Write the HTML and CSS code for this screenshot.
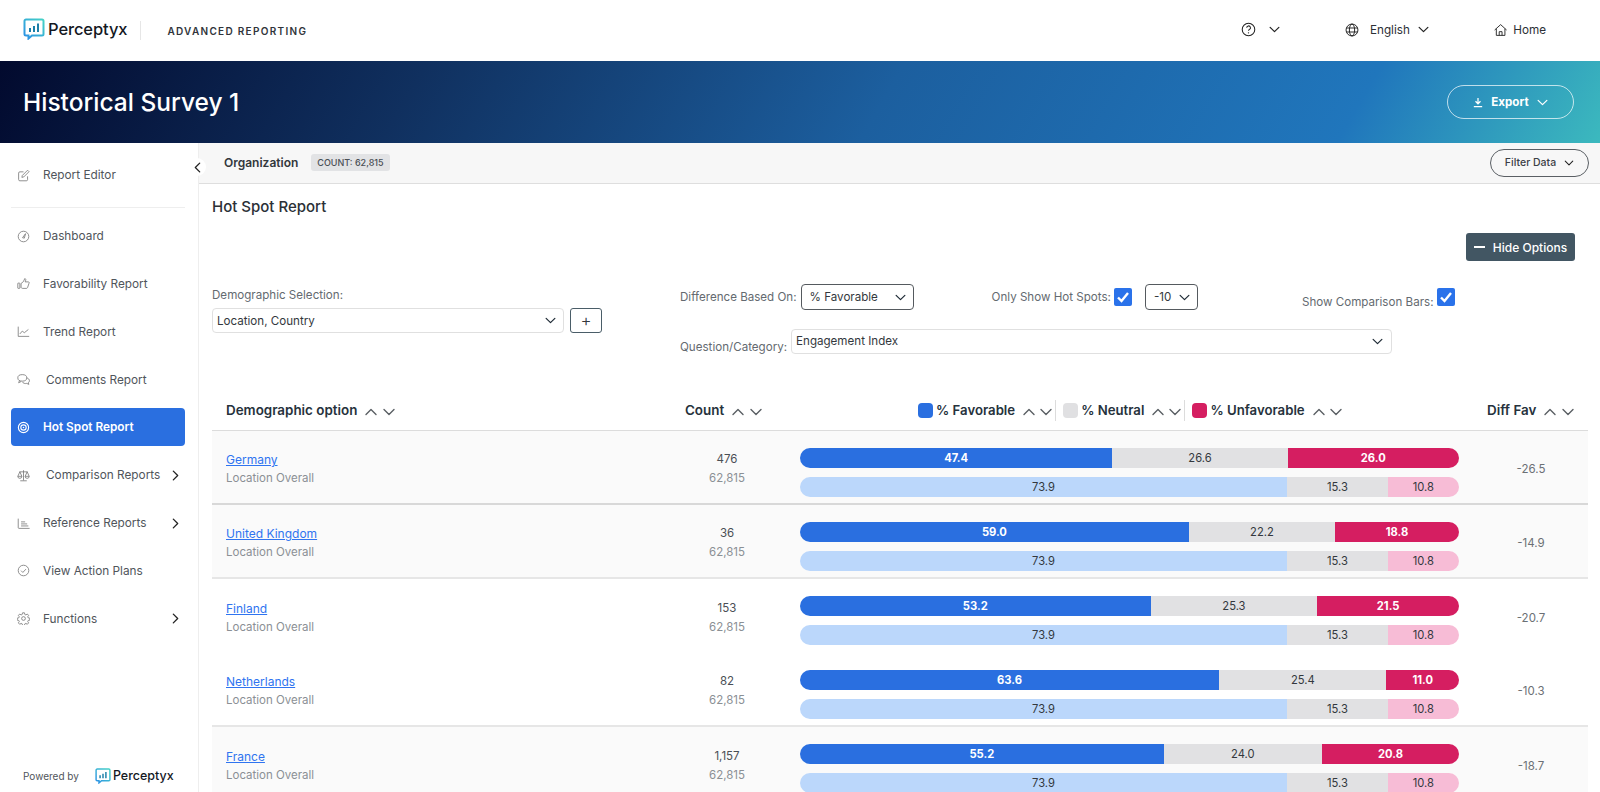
FILE: index.html
```html
<!DOCTYPE html>
<html lang="en">
<head>
<meta charset="utf-8">
<title>Hot Spot Report</title>
<link rel="stylesheet" href="styles.css">
</head>
<body>
<svg class="defs" width="0" height="0" aria-hidden="true">
  <defs>
    <linearGradient id="lg" x1="1" y1="0" x2="0" y2="1"><stop offset="0" stop-color="#45d2c6"/><stop offset="1" stop-color="#2b8fe6"/></linearGradient>
    <symbol id="down" viewBox="0 0 12 8"><path d="M1 1.5l5 5 5-5" fill="none" stroke="currentColor" stroke-width="1.4" stroke-linecap="round" stroke-linejoin="round"/></symbol>
    <symbol id="up" viewBox="0 0 12 8"><path d="M1 6.5l5-5 5 5" fill="none" stroke="currentColor" stroke-width="1.4" stroke-linecap="round" stroke-linejoin="round"/></symbol>
    <symbol id="right" viewBox="0 0 8 12"><path d="M1.5 1l5 5-5 5" fill="none" stroke="currentColor" stroke-width="1.5" stroke-linecap="round" stroke-linejoin="round"/></symbol>
    <symbol id="logo" viewBox="0 0 22 22"><path d="M3 1.500h16a1.500 1.500 0 0 1 1.500 1.500v13a1.500 1.500 0 0 1-1.500 1.500H9l-3.500 3v-3H3A1.500 1.500 0 0 1 1.500 16V3A1.500 1.500 0 0 1 3 1.500z" fill="#fff" stroke="url(#lg)" stroke-width="2"/><path d="M7 10v4M11 8v6M15 5.500V14" stroke="#1b7fa8" stroke-width="2"/></symbol>
  </defs>
</svg>

<header class="topbar">
  <div class="brand">
    <svg class="logo"><use href="#logo"/></svg>
    <span class="brand-name">Perceptyx</span>
    <span class="brand-sep"></span>
    <span class="brand-sub">ADVANCED REPORTING</span>
  </div>
  <nav class="topnav">
    <div class="topnav-item help">
      <svg class="ico-16" viewBox="0 0 16 16"><circle cx="8" cy="8" r="6.700" fill="none" stroke="#222" stroke-width="1.100"/><path d="M6.100 6.200a2 2 0 1 1 3 1.700c-.7.4-1.100.8-1.100 1.500" fill="none" stroke="#222" stroke-width="1.100"/><circle cx="8" cy="11.500" r=".7" fill="#222"/></svg>
      <svg class="chev-top"><use href="#down"/></svg>
    </div>
    <div class="topnav-item lang">
      <svg class="ico-14" viewBox="0 0 16 16"><g fill="none" stroke="#222" stroke-width="1.100"><circle cx="8" cy="8" r="6.800"/><ellipse cx="8" cy="8" rx="3" ry="6.800"/><path d="M1.500 5.700h13M1.500 10.300h13"/></g></svg>
      <span>English</span>
      <svg class="chev-top"><use href="#down"/></svg>
    </div>
    <div class="topnav-item home">
      <svg class="ico-14" viewBox="0 0 16 16"><path d="M.8 8L8 1.500 15.200 8M2.800 6.500V14.500h10.400V6.500M6.300 14.500V10h3.400v4.500" fill="none" stroke="#222" stroke-width="1.100" stroke-linejoin="round"/></svg>
      <span>Home</span>
    </div>
  </nav>
</header>

<section class="banner">
  <h1>Historical Survey 1</h1>
  <button class="export">
    <svg class="ico-export" viewBox="0 0 12 12"><path d="M6 .5v6.500M3 4.500L6 7.500l3-3M1 10.800h10" fill="none" stroke="#fff" stroke-width="1.500"/></svg>
    <span>Export</span>
    <svg class="chev-export"><use href="#down"/></svg>
  </button>
</section>

<div class="shell">
  <aside class="side">
    <button class="collapse" aria-label="Collapse"><svg viewBox="0 0 8 12"><path d="M6.500 1l-5 5 5 5" fill="none" stroke="#222" stroke-width="1.500" stroke-linecap="round" stroke-linejoin="round"/></svg></button>
    <a class="nav-item editor">
      <svg class="nav-ico" viewBox="0 0 16 16"><g fill="none" stroke="#777" stroke-width="1"><path d="M13 9v4a1.500 1.500 0 0 1-1.500 1.500h-8A1.500 1.500 0 0 1 2 13V5a1.500 1.500 0 0 1 1.500-1.500H8"/><path d="M6.500 8l6.500-6.500 1.800 1.800L8.300 9.800l-2.300.5z"/></g></svg>
      <span>Report Editor</span>
    </a>
    <div class="nav-rule"></div>
    <a class="nav-item">
      <svg class="nav-ico" viewBox="0 0 16 16"><g fill="none" stroke="#777" stroke-width="1"><circle cx="8" cy="8" r="6.500"/><path d="M6.800 9.500L10.500 4.500 9 10z"/></g></svg>
      <span>Dashboard</span>
    </a>
    <a class="nav-item">
      <svg class="nav-ico" viewBox="0 0 16 16"><g fill="none" stroke="#777" stroke-width="1"><rect x="1" y="7.500" width="2.500" height="6.500" rx=".5"/><path d="M5 8l3-2.500L9.500 2c1.200 0 1.500 1 1.200 2L10 6h4c1 0 1.200 1 .8 1.700L13 13c-.3.700-.8 1-1.500 1H7c-1 0-2-.5-2-1.500z"/></g></svg>
      <span>Favorability Report</span>
    </a>
    <a class="nav-item">
      <svg class="nav-ico" viewBox="0 0 16 16"><g fill="none" stroke="#777" stroke-width="1"><path d="M1.500 2v12h13.500"/><path d="M3.500 11l3-3.500 2.500 2 5-4"/></g></svg>
      <span>Trend Report</span>
    </a>
    <a class="nav-item wide">
      <svg class="nav-ico" viewBox="0 0 16 16"><g fill="none" stroke="#777" stroke-width="1"><ellipse cx="6.500" cy="6" rx="5.500" ry="4"/><path d="M3 9.500L2 12l3-1.500M12 6c2 .5 3.300 2 3.300 3.500 0 1-.5 1.800-1.300 2.500l.5 2-2.500-1.200c-2 .5-4.500 0-5.500-2"/></g></svg>
      <span>Comments Report</span>
    </a>
    <a class="nav-item active">
      <svg class="nav-ico" viewBox="0 0 16 16"><g fill="none" stroke="#fff"><circle cx="8" cy="8" r="6.300" stroke-width="1.400"/><circle cx="8" cy="8" r="3.300" stroke-width="1.400"/></g><circle cx="8" cy="8" r="1" fill="#fff"/></svg>
      <span>Hot Spot Report</span>
    </a>
    <a class="nav-item wide">
      <svg class="nav-ico" viewBox="0 0 16 16"><g fill="none" stroke="#777" stroke-width="1"><path d="M8 1.500V14M4 14.500h8M3 3.500h10M3.500 3.500L1 9h5zM12.500 3.500L10 9h5z"/><path d="M1 9a2.500 2.500 0 0 0 5 0M10 9a2.500 2.500 0 0 0 5 0"/></g></svg>
      <span>Comparison Reports</span>
      <svg class="nav-chev"><use href="#right"/></svg>
    </a>
    <a class="nav-item">
      <svg class="nav-ico" viewBox="0 0 16 16"><g fill="none" stroke="#777" stroke-width="1"><path d="M1.500 2v11a1 1 0 0 0 1 1h13"/><path d="M5 6h5M5 8.500h7.500M5 11h9"/></g></svg>
      <span>Reference Reports</span>
      <svg class="nav-chev"><use href="#right"/></svg>
    </a>
    <a class="nav-item">
      <svg class="nav-ico" viewBox="0 0 16 16"><g fill="none" stroke="#777" stroke-width="1"><circle cx="8" cy="8" r="6.500"/><path d="M5 8.200l2.200 2.200L11 6.300"/></g></svg>
      <span>View Action Plans</span>
    </a>
    <a class="nav-item">
      <svg class="nav-ico" viewBox="0 0 16 16"><g fill="none" stroke="#777" stroke-width="1"><circle cx="8" cy="8" r="2.300"/><path d="M6.800 1h2.400l.4 2 1.300.6 1.800-1.100 1.600 1.700-1.100 1.700.6 1.300 2 .4v2.400l-2 .4-.6 1.300 1.100 1.700-1.600 1.700-1.800-1.100-1.300.6-.4 2H6.800l-.4-2-1.300-.6-1.800 1.100-1.600-1.700 1.100-1.700-.6-1.300-2-.4V7.600l2-.4.6-1.300-1.100-1.700 1.600-1.700 1.800 1.100 1.300-.6z"/></g></svg>
      <span>Functions</span>
      <svg class="nav-chev"><use href="#right"/></svg>
    </a>
    <div class="powered">
      <span>Powered by</span>
      <svg class="logo-sm"><use href="#logo"/></svg>
      <b>Perceptyx</b>
    </div>
  </aside>

  <main class="main">
    <div class="toolbar">
      <strong>Organization</strong>
      <span class="count-badge">COUNT: 62,815</span>
      <button class="filter">Filter Data <svg class="chev-filter"><use href="#down"/></svg></button>
    </div>
    <div class="content">
      <h2>Hot Spot Report</h2>
      <div class="hide-row">
        <button class="hide-btn"><i></i>Hide Options</button>
      </div>
      <div class="options">
        <div class="opt-demo">
          <label>Demographic Selection:</label>
          <div class="opt-demo-row">
            <div class="select sel-demo"><span>Location, Country</span><svg class="chev-sel"><use href="#down"/></svg></div>
            <button class="plus">+</button>
          </div>
        </div>
        <div class="opt-mid">
          <div class="opt-line1">
            <label>Difference Based On:</label>
            <div class="select sel-dark sel-diff"><span>% Favorable</span><svg class="chev-sel"><use href="#down"/></svg></div>
            <label class="lbl-hot">Only Show Hot Spots:</label>
            <span class="check"><svg viewBox="0 0 18 18"><path d="M4 9.500l3.500 3.500L14 5" fill="none" stroke="#fff" stroke-width="2.400"/></svg></span>
            <div class="select sel-dark sel-ten"><span>-10</span><svg class="chev-sel"><use href="#down"/></svg></div>
            <div class="show-bars">
              <label>Show Comparison Bars:</label>
              <span class="check"><svg viewBox="0 0 18 18"><path d="M4 9.500l3.500 3.500L14 5" fill="none" stroke="#fff" stroke-width="2.400"/></svg></span>
            </div>
          </div>
          <div class="opt-line2">
            <label>Question/Category:</label>
            <div class="select sel-q"><span>Engagement Index</span><svg class="chev-sel"><use href="#down"/></svg></div>
          </div>
        </div>
      </div>

      <div class="table">
        <div class="thead">
          <div class="c-demo th">Demographic option <span class="sort"><svg><use href="#up"/></svg><svg><use href="#down"/></svg></span></div>
          <div class="c-count th">Count <span class="sort"><svg><use href="#up"/></svg><svg><use href="#down"/></svg></span></div>
          <div class="c-bars th th-bars">
            <span class="th-part"><i class="sw sw-fav"></i>% Favorable <span class="sort"><svg><use href="#up"/></svg><svg><use href="#down"/></svg></span></span>
            <span class="th-part sep"><i class="sw sw-neu"></i>% Neutral <span class="sort"><svg><use href="#up"/></svg><svg><use href="#down"/></svg></span></span>
            <span class="th-part sep"><i class="sw sw-unf"></i>% Unfavorable <span class="sort"><svg><use href="#up"/></svg><svg><use href="#down"/></svg></span></span>
          </div>
          <div class="c-diff th">Diff Fav <span class="sort"><svg><use href="#up"/></svg><svg><use href="#down"/></svg></span></div>
        </div>

        <div class="row shade line strong">
          <div class="c-demo"><a class="name">Germany</a><span class="sub">Location Overall</span></div>
          <div class="c-count"><span>476</span><span class="sub">62,815</span></div>
          <div class="c-bars">
            <div class="bar"><span class="b-fav" style="width:47.4%">47.4</span><span class="b-neu" style="width:26.6%">26.6</span><span class="b-unf" style="width:26%">26.0</span></div>
            <div class="bar cmp"><span class="b-fav" style="width:73.9%">73.9</span><span class="b-neu" style="width:15.3%">15.3</span><span class="b-unf" style="width:10.8%">10.8</span></div>
          </div>
          <div class="c-diff">-26.5</div>
        </div>
        <div class="row shade line">
          <div class="c-demo"><a class="name">United Kingdom</a><span class="sub">Location Overall</span></div>
          <div class="c-count"><span>36</span><span class="sub">62,815</span></div>
          <div class="c-bars">
            <div class="bar"><span class="b-fav" style="width:59%">59.0</span><span class="b-neu" style="width:22.2%">22.2</span><span class="b-unf" style="width:18.8%">18.8</span></div>
            <div class="bar cmp"><span class="b-fav" style="width:73.9%">73.9</span><span class="b-neu" style="width:15.3%">15.3</span><span class="b-unf" style="width:10.8%">10.8</span></div>
          </div>
          <div class="c-diff">-14.9</div>
        </div>
        <div class="row">
          <div class="c-demo"><a class="name">Finland</a><span class="sub">Location Overall</span></div>
          <div class="c-count"><span>153</span><span class="sub">62,815</span></div>
          <div class="c-bars">
            <div class="bar"><span class="b-fav" style="width:53.2%">53.2</span><span class="b-neu" style="width:25.3%">25.3</span><span class="b-unf" style="width:21.5%">21.5</span></div>
            <div class="bar cmp"><span class="b-fav" style="width:73.9%">73.9</span><span class="b-neu" style="width:15.3%">15.3</span><span class="b-unf" style="width:10.8%">10.8</span></div>
          </div>
          <div class="c-diff">-20.7</div>
        </div>
        <div class="row line">
          <div class="c-demo"><a class="name">Netherlands</a><span class="sub">Location Overall</span></div>
          <div class="c-count"><span>82</span><span class="sub">62,815</span></div>
          <div class="c-bars">
            <div class="bar"><span class="b-fav" style="width:63.6%">63.6</span><span class="b-neu" style="width:25.4%">25.4</span><span class="b-unf" style="width:11%">11.0</span></div>
            <div class="bar cmp"><span class="b-fav" style="width:73.9%">73.9</span><span class="b-neu" style="width:15.3%">15.3</span><span class="b-unf" style="width:10.8%">10.8</span></div>
          </div>
          <div class="c-diff">-10.3</div>
        </div>
        <div class="row shade">
          <div class="c-demo"><a class="name">France</a><span class="sub">Location Overall</span></div>
          <div class="c-count"><span>1,157</span><span class="sub">62,815</span></div>
          <div class="c-bars">
            <div class="bar"><span class="b-fav" style="width:55.2%">55.2</span><span class="b-neu" style="width:24%">24.0</span><span class="b-unf" style="width:20.8%">20.8</span></div>
            <div class="bar cmp"><span class="b-fav" style="width:73.9%">73.9</span><span class="b-neu" style="width:15.3%">15.3</span><span class="b-unf" style="width:10.8%">10.8</span></div>
          </div>
          <div class="c-diff">-18.7</div>
        </div>
      </div>
    </div>
  </main>
</div>
</body>
</html>
```
FILE: styles.css
```css
* { box-sizing: border-box; }
html, body { margin: 0; height: 792px; overflow: hidden; }
body { font-family: "Inter", "Liberation Sans", sans-serif; background: #fff; color: #33383d; font-size: 12px; }
.defs { position: absolute; }
button { font-family: inherit; }

.topbar { height: 61px; display: flex; align-items: center; justify-content: space-between; background: #fff; }
.brand { display: flex; align-items: center; padding-left: 23px; }
.logo { width: 22px; height: 22px; margin-top: -3px; }
.brand-name { font-size: 16.500px; font-weight: 500; color: #14181f; margin: -3px 0 0 3px; letter-spacing: -.1px; }
.brand-sep { width: 1px; height: 19px; background: #e6e6e6; margin: 0 26px 0 13px; }
.brand-sub { font-size: 10px; font-weight: 600; letter-spacing: 1.300px; color: #30343a; }
.topnav { display: flex; align-items: center; font-size: 11.700px; color: #2c3036; height: 20px; padding-right: 54px; margin-bottom: 2px; }
.topnav-item { display: flex; align-items: center; }
.help { width: 104px; }
.help .chev-top { margin-left: 13px; }
.lang { width: 149px; }
.lang span { margin: 0 8px 0 11px; }
.home { width: 52px; }
.home span { margin-left: 6px; }
.ico-16 { width: 15px; height: 15px; }
.ico-14 { width: 14px; height: 14px; }
.chev-top { width: 11px; height: 7px; color: #222; }

.banner { height: 82px; display: flex; align-items: center; justify-content: space-between; padding: 0 26px 0 23px; background: linear-gradient(120deg, #020a2e 0%, #10305f 26%, #1c5f9f 55%, #2076bc 84%, #3cb9be 100%); }
.banner h1 { margin: 0; font-size: 24.500px; font-weight: 500; color: #fff; }
.export { width: 127px; height: 34px; border: 1.500px solid rgba(255,255,255,.7); border-radius: 17px; background: transparent; color: #fff; display: flex; align-items: center; justify-content: center; font-size: 11.600px; font-weight: 700; padding: 0; }
.ico-export { width: 10px; height: 11px; margin-right: 8px; }
.chev-export { width: 11px; height: 7px; margin-left: 8px; color: #fff; }

.shell { display: flex; height: 649px; }
.side { width: 199px; flex: none; border-right: 1px solid #eeeeee; padding: 7px 13px 0 11px; position: relative; display: flex; flex-direction: column; }
.collapse { position: absolute; top: 15px; left: 188px; width: 18px; height: 18px; border-radius: 50%; border: 0; background: #fff; padding: 3px 5px; z-index: 2; display: flex; align-items: center; justify-content: center; }
.collapse svg { width: 7px; height: 11px; flex: none; }
.nav-item { height: 38px; margin-bottom: 9.850px; display: flex; align-items: center; padding-left: 6px; border-radius: 4px; color: #50555b; font-size: 11.800px; }
.nav-item.editor { margin-bottom: 5px; margin-top: 6px; }
.nav-ico { width: 13px; height: 13px; flex: none; margin-right: 13px; }
.nav-item.wide .nav-ico { margin-right: 16px; }
.nav-chev { width: 7px; height: 11px; margin-left: auto; margin-right: 6px; color: #222; }
.nav-rule { height: 1px; background: #eeeeee; margin: 8px 0 9px; }
.nav-item.active { background: #2a6fe0; color: #fff; font-weight: 600; }
.powered { margin-top: auto; height: 33px; display: flex; align-items: center; padding-left: 12px; font-size: 10px; color: #50555b; }
.logo-sm { width: 16px; height: 16px; margin-left: 16px; }
.powered b { font-size: 12.500px; font-weight: 500; color: #14181f; margin-left: 2px; }

.main { flex: 1; min-width: 0; }
.toolbar { height: 41px; background: #f7f7f7; border-bottom: 1px solid #dedede; display: flex; align-items: center; padding: 0 11px 1px 25px; }
.toolbar strong { font-size: 12px; font-weight: 600; color: #33383d; }
.count-badge { margin-left: 13px; background: #e2e3e5; border-radius: 3px; padding: 0 6px; height: 17px; line-height: 17px; font-size: 9px; font-weight: 500; color: #4a4f55; }
.filter { margin-left: auto; width: 99px; height: 28px; border: 1px solid #5a5f64; border-radius: 14px; background: transparent; display: flex; align-items: center; justify-content: center; gap: 8px; color: #3b4046; font-size: 10.500px; font-weight: 500; padding: 0; }
.chev-filter { width: 10px; height: 6px; color: #222; }

.content { padding: 0 12px 0 13px; }
.content h2 { margin: 0; padding-top: 13px; height: 37px; font-size: 15px; font-weight: 500; color: #2b3036; }
.hide-row { height: 61px; display: flex; justify-content: flex-end; padding: 12px 13px 0 0; }
.hide-btn { width: 109px; height: 28px; border: 0; border-radius: 3px; background: #425663; color: #fff; font-size: 12px; font-weight: 500; display: flex; align-items: center; justify-content: center; gap: 8px; padding: 0; }
.hide-btn i { width: 11px; height: 1.500px; background: #fff; }

.options { display: flex; height: 103px; font-size: 11.600px; color: #646a70; }
.opt-demo { width: 468px; padding-top: 6px; }
.opt-demo label { display: block; height: 19px; }
.opt-demo-row { display: flex; align-items: center; gap: 6px; margin-top: 1px; }
.select { display: flex; align-items: center; justify-content: space-between; background: #fff; border: 1px solid #e0e0e0; border-radius: 4px; color: #33383d; }
.sel-demo { width: 352px; height: 25px; padding: 0 7px 0 4px; }
.plus { width: 32px; height: 25px; border: 1px solid #4a5d68; border-radius: 3px; background: #fff; color: #33383d; font-size: 17px; font-weight: 300; line-height: 1; padding: 0; }
.chev-sel { width: 11px; height: 7px; color: #1f2b36; flex: none; }
.opt-mid { flex: 1; margin-top: 2px; }
.opt-line1 { display: flex; align-items: center; height: 26px; }
.sel-dark { border-color: #555a5f; height: 26px; }
.sel-diff { width: 113px; margin-left: 4px; padding: 0 7px 0 8px; }
.lbl-hot { margin-left: 78px; }
.check { width: 18px; height: 18px; background: #2a72ea; border-radius: 2px; display: inline-block; margin-left: 3px; flex: none; }
.check svg { width: 18px; height: 18px; display: block; }
.sel-ten { width: 53px; margin-left: 13px; padding: 0 7px 0 8px; }
.show-bars { display: flex; align-items: flex-start; margin-left: 104px; height: 26px; }
.show-bars label { margin-top: 11px; }
.show-bars .check { margin-left: 4px; margin-top: 4px; }
.opt-line2 { display: flex; align-items: flex-end; margin-top: 19px; }
.sel-q { width: 601px; height: 25px; margin-left: 4px; padding: 0 8px 0 4px; }
.sel-q span { margin-top: -1px; }

.thead, .row { display: flex; }
.thead { height: 46px; align-items: flex-start; padding-top: 15px; border-bottom: 1px solid #dcdcdc; }
.th { font-size: 13.400px; font-weight: 600; color: #26323c; white-space: nowrap; display: flex; align-items: center; height: 20px; }
.sort { display: inline-flex; gap: 6px; margin-left: 8px; color: #5a5f64; padding-top: 3px; }
.sort svg { width: 12px; height: 8px; }
.c-demo { width: 438px; padding-left: 14px; }
.c-count { width: 150px; padding-left: 4px; text-align: center; }
.c-bars { width: 659px; }
.c-diff { flex: 1; text-align: center; padding-left: 15px; }
.th.c-count { justify-content: flex-start; padding-left: 35px; }
.th.c-diff { justify-content: flex-start; padding-left: 28px; }
.th-bars { justify-content: flex-start; padding-left: 118px; font-size: 13.200px; }
.th-part { display: inline-flex; align-items: center; }
.th-part.sep { border-left: 1px solid #dcdcdc; margin-left: 3px; padding-left: 7px; height: 21px; }
.th-part .sort { gap: 5px; }
.sw { width: 15px; height: 15px; border-radius: 4px; margin-right: 3px; display: inline-block; }
.sw-fav { background: #2a6fe0; }
.sw-neu { background: #e0e0e2; }
.sw-unf { background: #d51e61; }

.row { height: 74px; align-items: center; font-size: 11.500px; color: #4a4f55; }
.row.shade { background: #fafafa; }
.row.line { border-bottom: 2px solid #e6e6e6; }
.row.line.strong { border-bottom-color: #d8d8d8; }
.row .c-demo { display: flex; flex-direction: column; gap: 4px; padding-top: 3px; }
.row .c-count { display: flex; flex-direction: column; gap: 5px; padding-top: 3px; }
.row .sub { color: #8b9095; }
.name { color: #2f74f0; text-decoration: underline; font-size: 12px; }
.row .c-bars { align-self: flex-start; padding-top: 17px; }
.bar { display: flex; height: 20px; border-radius: 10px; overflow: hidden; font-size: 11.200px; }
.bar + .bar { margin-top: 9px; }
.bar span { display: flex; align-items: center; justify-content: center; }
.b-fav { background: #2a6fe0; color: #fff; font-weight: 700; }
.b-neu { background: #e1e1e3; color: #33383d; }
.b-unf { background: #d51e61; color: #fff; font-weight: 700; }
.cmp .b-fav { background: #bbd7fb; color: #33383d; font-weight: 400; }
.cmp .b-unf { background: #f7bcd6; color: #33383d; font-weight: 400; }
.row .c-diff { color: #6b7075; padding-top: 4px; }
```
